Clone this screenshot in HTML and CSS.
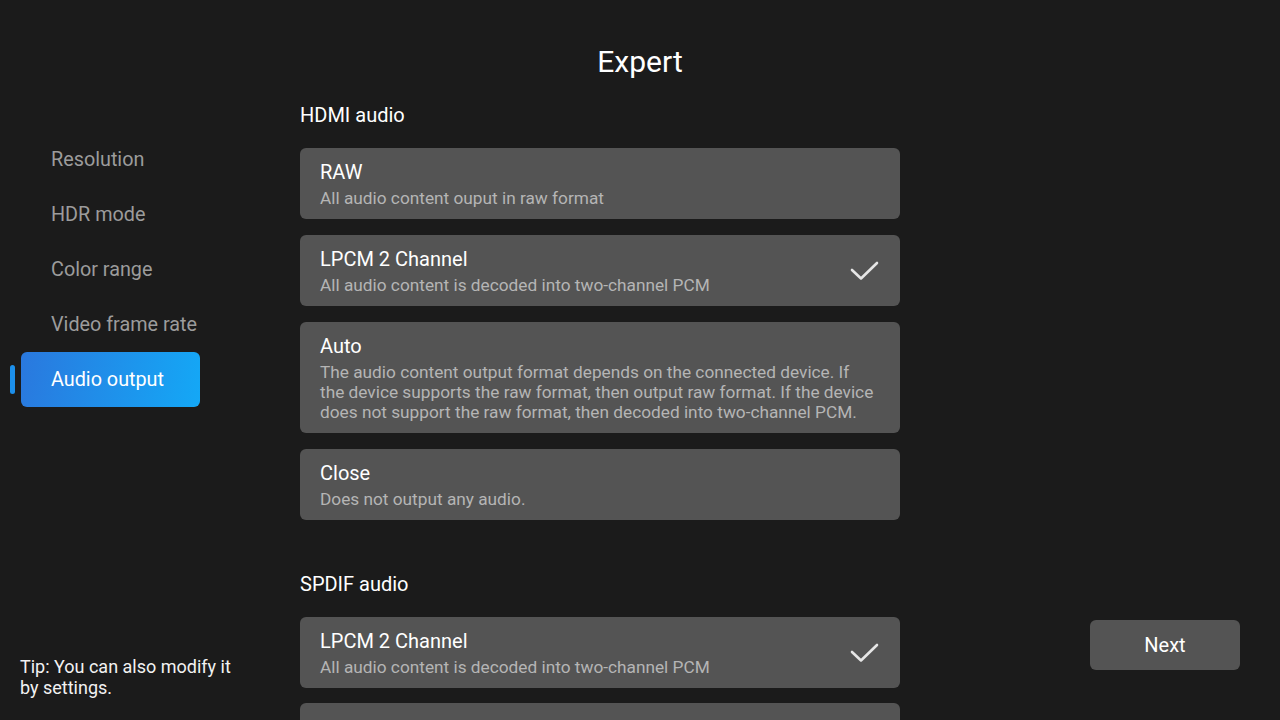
FILE: index.html
```html
<!DOCTYPE html>
<html lang="en">
<head>
    <meta charset="UTF-8">
    <meta name="viewport" content="width=device-width, initial-scale=1.0">
    <title>Expert</title>
    <link rel="stylesheet" href="styles.css">
</head>
<body>
    <h1 class="page-title">Expert</h1>

    <div class="layout">
        <aside class="side">
            <ul class="nav">
                <li class="nav-item">Resolution</li>
                <li class="nav-item">HDR mode</li>
                <li class="nav-item">Color range</li>
                <li class="nav-item">Video frame rate</li>
                <li class="nav-item active">Audio output</li>
            </ul>
            <p class="tip">Tip: You can also modify it by settings.</p>
        </aside>

        <main class="options">
            <h2 class="section-title">HDMI audio</h2>
            <div class="option-list">
                <div class="option">
                    <div class="option-text">
                        <div class="option-name">RAW</div>
                        <div class="option-desc">All audio content ouput in raw format</div>
                    </div>
                </div>
                <div class="option">
                    <div class="option-text">
                        <div class="option-name">LPCM 2 Channel</div>
                        <div class="option-desc">All audio content is decoded into two-channel PCM</div>
                    </div>
                    <svg class="check" width="30" height="22" viewBox="0 0 30 22">
                        <path d="M3 10 L12 18.5 L28 3" fill="none" stroke="#e6e6e6" stroke-width="2.6" stroke-linecap="round" stroke-linejoin="round"/>
                    </svg>
                </div>
                <div class="option">
                    <div class="option-text">
                        <div class="option-name">Auto</div>
                        <div class="option-desc">The audio content output format depends on the connected device. If the device supports the raw format, then output raw format. If the device does not support the raw format, then decoded into two-channel PCM.</div>
                    </div>
                </div>
                <div class="option">
                    <div class="option-text">
                        <div class="option-name">Close</div>
                        <div class="option-desc">Does not output any audio.</div>
                    </div>
                </div>
            </div>

            <h2 class="section-title spdif">SPDIF audio</h2>
            <div class="option-list">
                <div class="option">
                    <div class="option-text">
                        <div class="option-name">LPCM 2 Channel</div>
                        <div class="option-desc">All audio content is decoded into two-channel PCM</div>
                    </div>
                    <svg class="check" width="30" height="22" viewBox="0 0 30 22">
                        <path d="M3 10 L12 18.5 L28 3" fill="none" stroke="#e6e6e6" stroke-width="2.6" stroke-linecap="round" stroke-linejoin="round"/>
                    </svg>
                </div>
                <div class="option option-peek"></div>
            </div>
        </main>

        <div class="actions">
            <button class="next-btn">Next</button>
        </div>
    </div>
</body>
</html>
```

FILE: styles.css
```css
html, body {
    margin: 0;
    padding: 0;
}

body {
    width: 1280px;
    height: 720px;
    overflow: hidden;
    background-color: #1b1b1b;
    color: #ffffff;
    font-family: Roboto, "Liberation Sans", sans-serif;
}

.page-title {
    margin: 0;
    padding-top: 44px;
    height: 36px;
    font-size: 30px;
    line-height: 36px;
    font-weight: 400;
    text-align: center;
}

.layout {
    display: flex;
    height: 640px;
}

/* Left menu */
.side {
    width: 300px;
    flex-shrink: 0;
    display: flex;
    flex-direction: column;
    padding-top: 52px;
    box-sizing: border-box;
}

.nav {
    list-style: none;
    margin: 0;
    padding: 0;
}

.nav-item {
    position: relative;
    display: flex;
    align-items: center;
    width: 179px;
    height: 55px;
    margin-left: 21px;
    padding-left: 30px;
    box-sizing: border-box;
    border-radius: 6px;
    font-size: 19.8px;
    color: #9c9c9c;
}

.nav-item.active {
    color: #ffffff;
    background: linear-gradient(100deg, #2a78de 0%, #14a8f6 100%);
}

/* little blue marker left of the selected item */
.nav-item.active::before {
    content: "";
    position: absolute;
    left: -11px;
    top: 13px;
    width: 5px;
    height: 29px;
    border-radius: 3px;
    background: #1c8fea;
}

.tip {
    margin: auto 0 0 0;
    padding: 0 0 22px 20px;
    width: 222px;
    font-size: 18px;
    line-height: 21px;
    color: #f2f2f2;
}

/* Option cards */
.options {
    width: 600px;
    flex-shrink: 0;
    padding-top: 23px;
}

.section-title {
    margin: 0 0 21px 0;
    font-size: 20px;
    line-height: 24px;
    font-weight: 400;
}

.section-title.spdif {
    margin-top: 52px;
}

.option-list {
    display: flex;
    flex-direction: column;
    gap: 16px;
}

.option {
    display: flex;
    align-items: center;
    min-height: 71px;
    padding: 12px 21px 11px 20px;
    box-sizing: border-box;
    border-radius: 6px;
    background-color: #545454;
}

.option-peek {
    margin-top: -1px;
}

.option-text {
    flex: 1;
    padding-right: 3px;
}

.option-name {
    font-size: 20px;
    line-height: 24px;
    color: #ffffff;
}

.option-desc {
    margin-top: 4px;
    font-size: 17.25px;
    line-height: 20px;
    color: #b5b5b5;
}

.check {
    flex-shrink: 0;
    margin-left: -3px;
}

/* Next button */
.actions {
    flex: 1;
    display: flex;
    justify-content: flex-end;
    align-items: flex-end;
    padding: 0 40px 50px 0;
}

.next-btn {
    width: 150px;
    height: 50px;
    border: none;
    border-radius: 6px;
    background-color: #545454;
    color: #ffffff;
    font-family: Roboto, "Liberation Sans", sans-serif;
    font-size: 20px;
}
```
